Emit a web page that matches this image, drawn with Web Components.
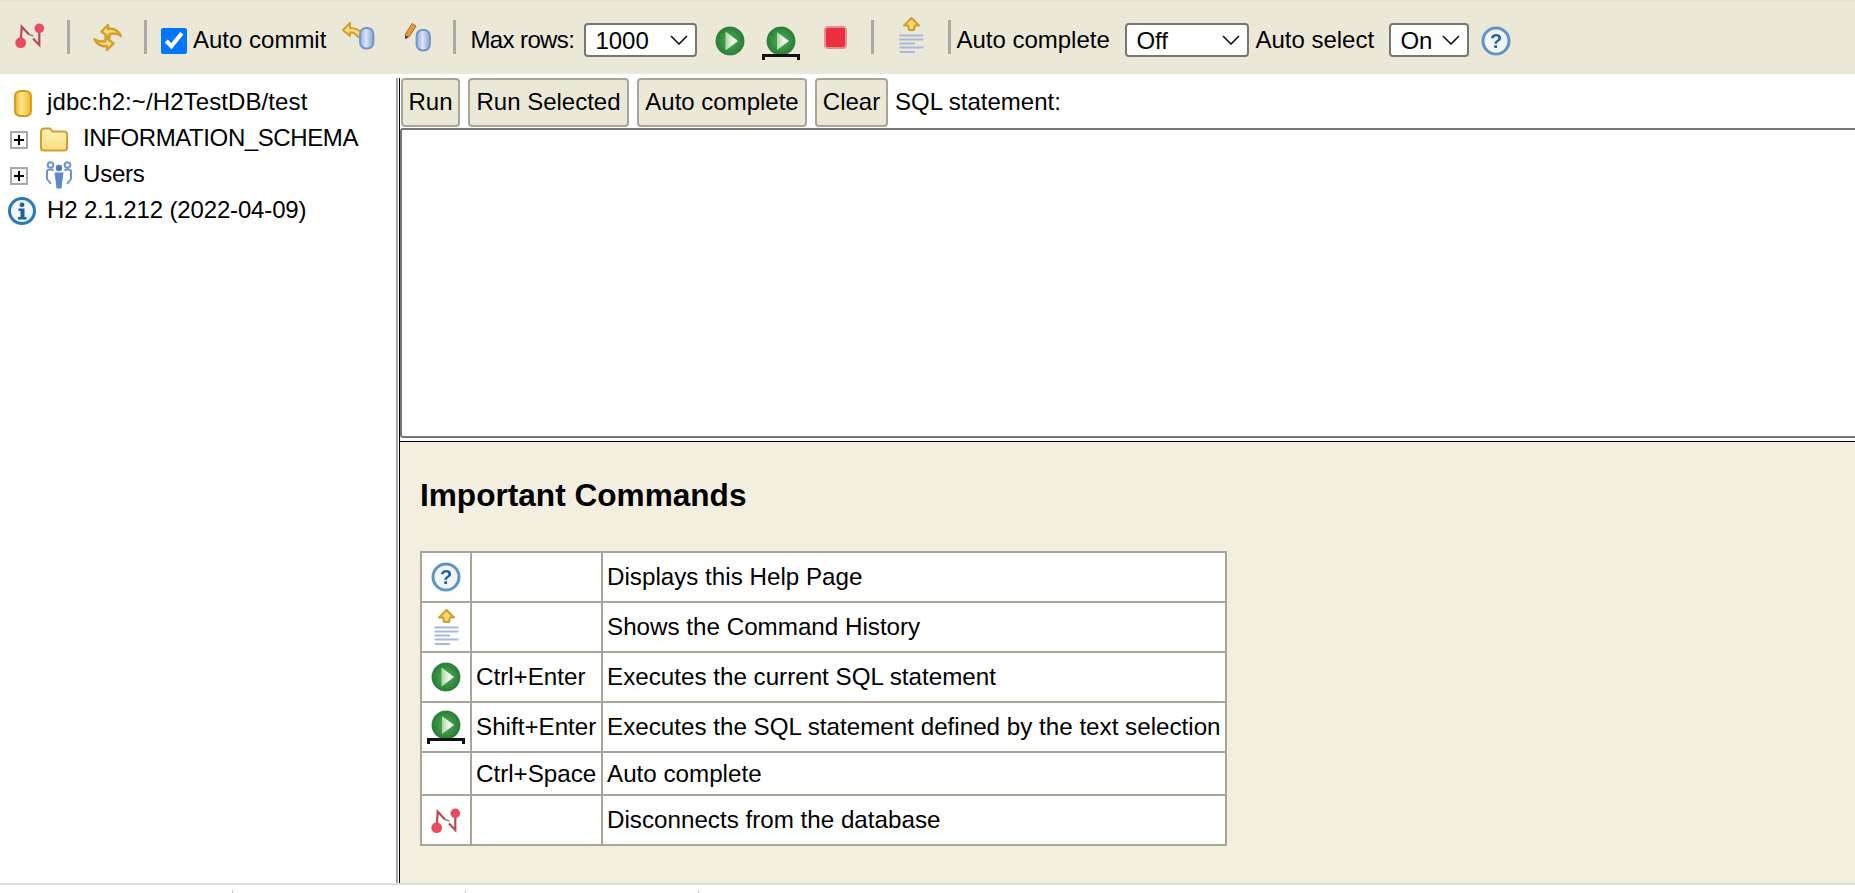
<!DOCTYPE html>
<html>
<head>
<meta charset="utf-8">
<title>H2 Console</title>
<style>
    html, body { margin: 0; height: 100%; overflow: hidden; background: #fff; }
    body { font: 24px "Liberation Sans", Arial, sans-serif; color: #000; }
</style>
</head>
<body>
<h2-console></h2-console>
<script>
// sprites at the size they have on screen: [width, height, markup]
const DB_BLUE = `<defs><linearGradient id="b"><stop offset="0" stop-color="#8fabdc"/><stop offset=".45" stop-color="#dbe6f6"/><stop offset="1" stop-color="#7f9fd4"/></linearGradient></defs>`;
const GREEN = `<defs><radialGradient id="g" cx=".5" cy=".5" r=".55"><stop offset=".4" stop-color="#3f9b48"/><stop offset=".85" stop-color="#2b7f38"/><stop offset="1" stop-color="#6fb274"/></radialGradient><linearGradient id="t" x1="0" x2="1"><stop offset="0" stop-color="#a9d6a0"/><stop offset=".6" stop-color="#f4f9ef"/></linearGradient></defs>`;
const ICONS = {
    disconnect: [30, 26, `<path d="M5.7 19 L6.7 3.7 L14 11.5 M18 15.5 L24.3 22 L24.3 5" fill="none" stroke="#b84a58" stroke-width="2.2"/><path d="M14 11.5 L18.5 13" stroke="#8a8a80" stroke-width="1.4"/><circle cx="5.7" cy="19.7" r="5.4" fill="#ea4a60"/><circle cx="24.3" cy="5.3" r="4.8" fill="#ea4a60"/>`],
    refresh: [30, 31, `<path d="M15 3 L15 7 C21 6 25 8 28 14 C25 11.5 21 11 16.5 12 L16.5 16 L8.5 9.5 Z" fill="#f8dd84" stroke="#d2a02e" stroke-width="2.4" stroke-linejoin="round"/><path d="M14 28 L14 24 C8 25 4 23 1.5 17 C4 19.5 8 20 12.5 19 L12.5 15 L20.5 21.5 Z" fill="#f8dd84" stroke="#d2a02e" stroke-width="2.4" stroke-linejoin="round"/>`],
    rollback: [32, 27, `${DB_BLUE}<path d="M8 1 L1 8 L8 14 L8 10.5 C11 10.5 14 11.5 16 15 L20 12 C18 8 13 6 8 6 Z" fill="#f6d97c" stroke="#cf9f33" stroke-width="2" stroke-linejoin="round"/><rect x="18" y="6" width="13.5" height="20.5" rx="6" fill="url(#b)" stroke="#7393cc" stroke-width="1.8"/>`],
    commit: [27, 29, `${DB_BLUE}<path d="M1.5 12 L8 1.5 L12 4 L5.5 14.5 L1.5 16.5 Z" fill="#e39a3e" stroke="#a8702e" stroke-width="1"/><path d="M1.3 13.5 L1.3 17 L4.5 15 Z" fill="#333"/><rect x="12.5" y="8" width="13.5" height="20.5" rx="6" fill="url(#b)" stroke="#7393cc" stroke-width="1.8"/>`],
    run: [30, 30, `${GREEN}<circle cx="15" cy="15" r="14.5" fill="url(#g)"/><path d="M10.5 5.5 L23 15 L10.5 24.5 Z" fill="url(#t)"/>`],
    runselected: [38, 33, `${GREEN}<circle cx="19" cy="14" r="14.5" fill="url(#g)"/><path d="M15 5 L27 14 L15 23 Z" fill="url(#t)"/><path d="M1.5 33 L1.5 28.5 L36.5 28.5 L36.5 33" fill="none" stroke="#111" stroke-width="3"/>`],
    stop: [23, 23, `<rect x="1" y="1" width="21" height="21" rx="3" fill="#ec2f3f" stroke="#e58f90" stroke-width="2"/>`],
    history: [25, 37, `<path d="M12.5 1 L20 8.5 L16 8.5 L15 13 L10 13 L9 8.5 L5 8.5 Z" fill="#f6d668" stroke="#cd9e30" stroke-width="2" stroke-linejoin="round"/><path d="M0.5 18.5 H24.5 M0.5 22.5 H24.5 M0.5 26.5 H16 M0.5 30.5 H24.5 M0.5 35 H16" stroke="#a8b9dc" stroke-width="2"/>`],
    help: [30, 30, `<circle cx="15" cy="15" r="13" fill="#f2f6fb" stroke="#5e95c2" stroke-width="3"/><text x="15" y="22" text-anchor="middle" font-family="Liberation Sans" font-weight="700" font-size="20" fill="#24609b">?</text>`],
    database: [18, 27, `<defs><linearGradient id="d"><stop offset="0" stop-color="#eeae1c"/><stop offset=".4" stop-color="#fdeb96"/><stop offset="1" stop-color="#efb320"/></linearGradient></defs><rect x="1" y="1" width="16" height="25" rx="6" ry="4.5" fill="url(#d)" stroke="#d9980f" stroke-width="1.8"/>`],
    folder: [28, 25, `<defs><linearGradient id="f" x2="0" y2="1"><stop offset="0" stop-color="#fdf1b8"/><stop offset="1" stop-color="#f9de7e"/></linearGradient></defs><path d="M1 5 C1 2 2.5 1.5 4.5 1.5 L10 1.5 L12.5 4.5 L24 4.5 C26 4.5 27 5.5 27 7 L27 21 C27 23 26 23.5 24 23.5 L4 23.5 C2 23.5 1 23 1 21 Z" fill="url(#f)" stroke="#cf9d3c" stroke-width="2"/>`],
    users: [28, 28, `<g fill="none" stroke="#6f95c9" stroke-width="2"><circle cx="5.5" cy="4" r="2.8"/><circle cx="22.5" cy="4" r="2.8"/><path d="M1.5 10 C3.5 8 7 8 8.5 9.5 M19.5 9.5 C21 8 24.5 8 26.5 10 M2 10 V18 L6 23 M26 10 V18 L22 23"/></g><circle cx="14" cy="7" r="3.2" fill="#4e7cbc"/><path d="M9.5 11.5 H18.5 L17.5 19 L16.5 27.5 H11.5 L10.5 19 Z" fill="#5c8ac9"/>`],
    info: [30, 28, `<circle cx="15" cy="14" r="12.5" fill="#f2f6fb" stroke="#2a7ab8" stroke-width="3"/><circle cx="15" cy="7.8" r="2.4" fill="#1d5f9a"/><path d="M11.5 11.5 H17.5 V20 H19.5 V22.5 H11 V20 H13.5 V14 H11.5 Z" fill="#1d5f9a"/>`]
};

class H2Icon extends HTMLElement {
    connectedCallback() {
        const [w, h, svg] = ICONS[this.getAttribute('name')];
        this.attachShadow({ mode: 'open' }).innerHTML = `
            <style>
                :host { display: inline-flex; flex: none; }
                svg { display: block; overflow: visible; filter: blur(.35px); }
            </style>
            <svg width="${w}" height="${h}" viewBox="0 0 ${w} ${h}">${svg}</svg>
        `;
    }
}
customElements.define('h2-icon', H2Icon);

class H2Select extends HTMLElement {
    connectedCallback() {
        const opts = this.getAttribute('options').split(',');
        this.attachShadow({ mode: 'open' }).innerHTML = `
            <style>
                :host { display: inline-block; position: relative; flex: none; height: 34px; }
                select {
                    appearance: none; box-sizing: border-box; width: 100%; height: 100%;
                    border: 2px solid #767676; border-radius: 4px; background: #fff;
                    font: inherit; color: #000; padding: 0 0 0 9px; margin: 0; outline: none;
                }
                svg { position: absolute; right: 9px; top: 12px; pointer-events: none; }
            </style>
            <select>${opts.map(o => `<option>${o}</option>`).join('')}</select>
            <svg width="18" height="10" viewBox="0 0 18 10"><path d="M1 1 L9 9 L17 1" fill="none" stroke="#111" stroke-width="1.6"/></svg>
        `;
    }
}
customElements.define('h2-select', H2Select);

class H2Toolbar extends HTMLElement {
    constructor() {
        super();
        this.attachShadow({ mode: 'open' }).innerHTML = `
            <style>
                :host {
                    display: flex; align-items: center; height: 68px; flex: none;
                    background: #ece8d8; border-top: 1px solid #e0e0e0; padding: 5px 0 0 15px;
                    font: 24px "Liberation Sans", sans-serif;
                }
                .sep { width: 3px; height: 34px; background: #a9a9a5; flex: none; margin-bottom: 7px; }
                input { width: 26px; height: 26px; margin: 2px 6px 0 0; flex: none; accent-color: #0075ff; }
                label { display: flex; align-items: center; flex: none; white-space: nowrap; }
                span { white-space: nowrap; flex: none; }
            </style>
            <h2-icon name="disconnect" style="margin-bottom:9px"></h2-icon>
            <div class="sep" style="margin-left:22px"></div>
            <h2-icon name="refresh" style="margin-left:23px;margin-bottom:5px"></h2-icon>
            <div class="sep" style="margin-left:21px"></div>
            <label style="margin-left:14px"><input type="checkbox" checked>Auto commit</label>
            <h2-icon name="rollback" style="margin-left:16px;margin-bottom:10px"></h2-icon>
            <h2-icon name="commit" style="margin-left:30px;margin-bottom:8px"></h2-icon>
            <div class="sep" style="margin-left:22px"></div>
            <span style="margin-left:14px;width:104px;letter-spacing:-.6px">Max rows:</span>
            <h2-select options="1000,10,100,100000" style="width:113px;margin-left:10px"></h2-select>
            <h2-icon name="run" style="margin-left:18px;margin-top:2px"></h2-icon>
            <h2-icon name="runselected" style="margin-left:17px;margin-top:6px"></h2-icon>
            <h2-icon name="stop" style="margin-left:24px;margin-bottom:6px"></h2-icon>
            <div class="sep" style="margin-left:24px"></div>
            <h2-icon name="history" style="margin-left:25px;margin-bottom:9px"></h2-icon>
            <div class="sep" style="margin-left:24px"></div>
            <span style="margin-left:5px;width:154px">Auto complete</span>
            <h2-select options="Off,Normal,Full" style="width:124px;margin-left:15px"></h2-select>
            <span style="margin-left:6px;width:121px">Auto select</span>
            <h2-select options="On,Off" style="width:80px;margin-left:13px"></h2-select>
            <h2-icon name="help" style="margin-left:12px;margin-top:2px"></h2-icon>
        `;
    }
}
customElements.define('h2-toolbar', H2Toolbar);

class H2Tree extends HTMLElement {
    constructor() {
        super();
        this.attachShadow({ mode: 'open' }).innerHTML = `
            <style>
                :host { display: block; width: 396px; flex: none; padding-top: 10px; box-sizing: border-box; background: #fff; }
                .row { display: flex; align-items: center; height: 36px; white-space: nowrap; }
                .row h2-icon { margin-top: 2px; }
                .plus {
                    box-sizing: border-box; width: 18px; height: 18px; border: 2px solid #a9a9a9; flex: none;
                    background: linear-gradient(#000,#000) center/10px 2px no-repeat, linear-gradient(#000,#000) center/2px 10px no-repeat, #fafafa;
                    margin: 3px 0 0 10px;
                }
            </style>
            <div class="row"><h2-icon name="database" style="margin-left:14px;margin-right:15px"></h2-icon><span style="letter-spacing:.1px">jdbc:h2:~/H2TestDB/test</span></div>
            <div class="row"><div class="plus"></div><h2-icon name="folder" style="margin-left:12px;margin-right:15px"></h2-icon><span style="letter-spacing:-.4px">INFORMATION_SCHEMA</span></div>
            <div class="row"><div class="plus"></div><h2-icon name="users" style="margin-left:17px;margin-right:10px"></h2-icon><span style="letter-spacing:-.2px">Users</span></div>
            <div class="row"><h2-icon name="info" style="margin-left:7px;margin-right:10px"></h2-icon><span style="letter-spacing:-.15px">H2 2.1.212 (2022-04-09)</span></div>
        `;
    }
}
customElements.define('h2-tree', H2Tree);

class H2Query extends HTMLElement {
    constructor() {
        super();
        this.attachShadow({ mode: 'open' }).innerHTML = `
            <style>
                :host { display: block; flex: none; height: 363px; background: #fff; overflow: hidden; }
                .bar { display: flex; align-items: center; gap: 8px; height: 49px; white-space: nowrap; margin-bottom: 1px; padding-left: 1px; }
                button {
                    height: 49px; box-sizing: border-box; background: #ece8d8; border: 2px solid #a9a697;
                    border-radius: 4px; font: inherit; color: #000; padding: 0 5px 2px; margin: 0;
                }
                span { margin-left: -1px; padding-bottom: 2px; }
                .sql {
                    display: block; box-sizing: border-box; width: 1600px; height: 310px; margin: 0;
                    border: 2px solid #767676; border-radius: 3px; resize: none; outline: none; background: #fff;
                }
            </style>
            <div class="bar">
                <button style="width:59px">Run</button><button style="width:161px">Run Selected</button><button style="width:170px">Auto complete</button><button style="width:73px">Clear</button>
                <span>SQL statement:</span>
            </div>
            <textarea class="sql"></textarea>
        `;
    }
}
customElements.define('h2-query', H2Query);

class H2Commands extends HTMLElement {
    constructor() {
        super();
        const rows = [
            ['help', '', 'Displays this Help Page', 50],
            ['history', '', 'Shows the Command History', 50],
            ['run', 'Ctrl+Enter', 'Executes the current SQL statement', 50],
            ['runselected', 'Shift+Enter', 'Executes the SQL statement defined by the text selection', 50],
            ['', 'Ctrl+Space', 'Auto complete', 43],
            ['disconnect', '', 'Disconnects from the database', 50]
        ];
        const body = rows.map(([icon, key, text, h]) => `
            <tr style="height:${h}px">
                <td class="i">${icon ? `<h2-icon name="${icon}"></h2-icon>` : ''}</td>
                <td>${key}</td>
                <td>${text}</td>
            </tr>`).join('');
        this.attachShadow({ mode: 'open' }).innerHTML = `
            <style>
                :host { display: block; flex: 1; min-height: 0; background: #f2eee0; padding: 35px 0 0 20px; overflow: hidden; }
                h1 { font: bold 31.6px "Liberation Sans", sans-serif; margin: 0 0 38px; line-height: 36px; }
                table { border-collapse: collapse; table-layout: fixed; width: 807px; background: #fff; font-size: 24.2px; }
                td { border: 2px solid #aaa697; padding: 0 0 0 4px; white-space: nowrap; overflow: hidden; }
                td.i { padding: 0; text-align: center; }
                td.i h2-icon { vertical-align: middle; }
            </style>
            <h1>Important Commands</h1>
            <table>
                <colgroup><col style="width:50px"><col style="width:131px"><col></colgroup>
                ${body}
            </table>
        `;
    }
}
customElements.define('h2-commands', H2Commands);

class H2Console extends HTMLElement {
    constructor() {
        super();
        this.attachShadow({ mode: 'open' }).innerHTML = `
            <style>
                :host { display: flex; flex-direction: column; height: 893px; width: 1855px; overflow: hidden; }
                .main { display: flex; height: 809px; flex: none; border-bottom: 2px solid #dfdfdf; }
                .right {
                    flex: 1; min-width: 0; display: flex; flex-direction: column; margin-top: 4px;
                    border-left: 2px solid #a9a9a9; padding-left: 1px;
                }
                .inner { flex: 1; min-width: 0; display: flex; flex-direction: column; border-left: 1px solid #000; }
                .rule { height: 1px; background: #000; flex: none; }
                .foot { flex: 1; position: relative; }
                .tick { position: absolute; bottom: 0; width: 1px; height: 3px; background: #c8c8c8; }
            </style>
            <h2-toolbar></h2-toolbar>
            <div class="main">
                <h2-tree></h2-tree>
                <div class="right"><div class="inner">
                    <h2-query></h2-query>
                    <div class="rule"></div>
                    <h2-commands></h2-commands>
                </div></div>
            </div>
            <div class="foot">
                <div class="tick" style="left:232px"></div>
                <div class="tick" style="left:465px"></div>
                <div class="tick" style="left:698px"></div>
            </div>
        `;
    }
}
customElements.define('h2-console', H2Console);
</script>
</body>
</html>
